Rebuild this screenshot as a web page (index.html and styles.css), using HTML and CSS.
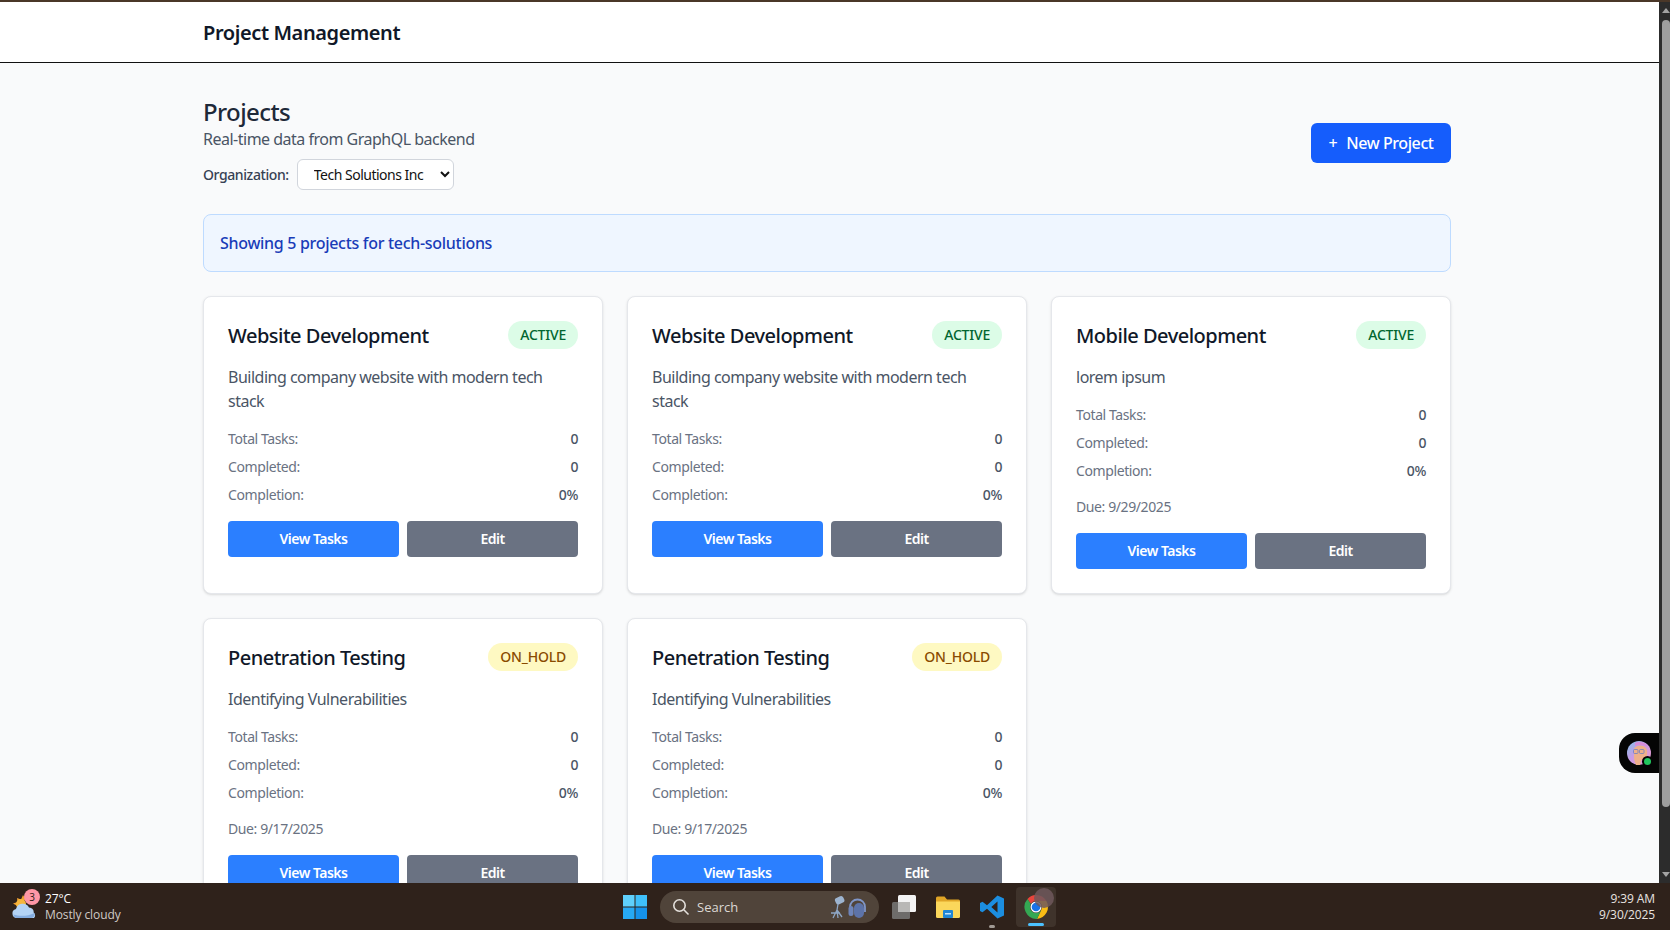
FILE: index.html
```html
<!DOCTYPE html>
<html lang="en">
<head>
  <meta charset="UTF-8" />
  <meta name="viewport" content="width=device-width, initial-scale=1.0" />
  <title>Project Management</title>
  <link rel="stylesheet" href="styles.css">
</head>
<body>
  <div class="screen">
    <div class="top-strip"></div>

    <div class="browser">
      <div class="page">
        <header class="site-header">
          <h1>Project Management</h1>
        </header>

        <main class="content">
          <div class="page-head">
            <div>
              <h2>Projects</h2>
              <p class="subtitle">Real-time data from GraphQL backend</p>
              <div class="org-row">
                <label for="org">Organization:</label>
                <select id="org">
                  <option>Tech Solutions Inc</option>
                </select>
              </div>
            </div>
            <button class="new-project"><span class="plus">+</span>New Project</button>
          </div>

          <div class="banner">Showing 5 projects for tech-solutions</div>

          <div class="grid">
            <div class="card">
              <div class="card-head">
                <h3>Website Development</h3>
                <span class="badge active">ACTIVE</span>
              </div>
              <p class="desc">Building company website with modern tech stack</p>
              <div class="stats">
                <div class="stat"><span>Total Tasks:</span><b>0</b></div>
                <div class="stat"><span>Completed:</span><b>0</b></div>
                <div class="stat"><span>Completion:</span><b>0%</b></div>
              </div>
              <div class="actions">
                <button class="btn view">View Tasks</button>
                <button class="btn edit">Edit</button>
              </div>
            </div>

            <div class="card">
              <div class="card-head">
                <h3>Website Development</h3>
                <span class="badge active">ACTIVE</span>
              </div>
              <p class="desc">Building company website with modern tech stack</p>
              <div class="stats">
                <div class="stat"><span>Total Tasks:</span><b>0</b></div>
                <div class="stat"><span>Completed:</span><b>0</b></div>
                <div class="stat"><span>Completion:</span><b>0%</b></div>
              </div>
              <div class="actions">
                <button class="btn view">View Tasks</button>
                <button class="btn edit">Edit</button>
              </div>
            </div>

            <div class="card">
              <div class="card-head">
                <h3>Mobile Development</h3>
                <span class="badge active">ACTIVE</span>
              </div>
              <p class="desc">lorem ipsum</p>
              <div class="stats">
                <div class="stat"><span>Total Tasks:</span><b>0</b></div>
                <div class="stat"><span>Completed:</span><b>0</b></div>
                <div class="stat"><span>Completion:</span><b>0%</b></div>
              </div>
              <p class="due">Due: 9/29/2025</p>
              <div class="actions">
                <button class="btn view">View Tasks</button>
                <button class="btn edit">Edit</button>
              </div>
            </div>

            <div class="card">
              <div class="card-head">
                <h3>Penetration Testing</h3>
                <span class="badge hold">ON_HOLD</span>
              </div>
              <p class="desc">Identifying Vulnerabilities</p>
              <div class="stats">
                <div class="stat"><span>Total Tasks:</span><b>0</b></div>
                <div class="stat"><span>Completed:</span><b>0</b></div>
                <div class="stat"><span>Completion:</span><b>0%</b></div>
              </div>
              <p class="due">Due: 9/17/2025</p>
              <div class="actions">
                <button class="btn view">View Tasks</button>
                <button class="btn edit">Edit</button>
              </div>
            </div>

            <div class="card">
              <div class="card-head">
                <h3>Penetration Testing</h3>
                <span class="badge hold">ON_HOLD</span>
              </div>
              <p class="desc">Identifying Vulnerabilities</p>
              <div class="stats">
                <div class="stat"><span>Total Tasks:</span><b>0</b></div>
                <div class="stat"><span>Completed:</span><b>0</b></div>
                <div class="stat"><span>Completion:</span><b>0%</b></div>
              </div>
              <p class="due">Due: 9/17/2025</p>
              <div class="actions">
                <button class="btn view">View Tasks</button>
                <button class="btn edit">Edit</button>
              </div>
            </div>
          </div>
        </main>

        <!-- floating chat widget -->
        <div class="widget">
          <span class="avatar">
            <svg width="24" height="24" viewBox="0 0 24 24">
              <defs>
                <linearGradient id="holo" x1="0" y1="0" x2="1" y2="1">
                  <stop offset="0" stop-color="#7fc4e8"/>
                  <stop offset="0.45" stop-color="#c99ae6"/>
                  <stop offset="1" stop-color="#ee9ac8"/>
                </linearGradient>
              </defs>
              <circle cx="12" cy="12" r="12" fill="url(#holo)"/>
              <path d="M9 24c-1-3-2-5-2-8V8c1-4 9-5 12-1 2 3 1 8 0 10-2 1-4 1-5 3l-1 4z" fill="#eeb08a"/>
              <path d="M8 2c4-2 10-1 13 4-3-2-9-3-13-1z" fill="#d98bd8"/>
              <rect x="6.500" y="8.500" width="4.500" height="4" rx="1" fill="none" stroke="#6d7fc0" stroke-width="0.800"/>
              <rect x="12.500" y="8.500" width="4.500" height="4" rx="1" fill="none" stroke="#6d7fc0" stroke-width="0.800"/>
            </svg>
            <span class="online"></span>
          </span>
        </div>
      </div>

      <div class="scrollbar">
        <span class="arrow up"></span>
        <span class="thumb"></span>
        <span class="arrow down"></span>
      </div>
    </div>

    <footer class="taskbar">
      <div class="weather">
        <span class="weather-icon">
          <svg width="26" height="26" viewBox="0 0 26 26">
            <path d="M2 9.500l4.500-1.500-.5-4 4 1.500 2-4.500 2.500 4-5 6-3 1z" fill="#f0a030"/>
            <circle cx="10" cy="10" r="5" fill="#f6b63c"/>
            <path d="M6 24a4.500 4.500 0 0 1-1-8.900 7 7 0 0 1 13-1.600 5.300 5.300 0 0 1 4.800 5.200A3.500 3.500 0 0 1 23 24z" fill="#b4d3f4"/>
            <path d="M2.500 20.500c6 2 14 2 21-1.500a4 4 0 0 1-3 5H6a4 4 0 0 1-3.500-3.500z" fill="#86aee0"/>
          </svg>
          <span class="weather-badge">3</span>
        </span>
        <div class="weather-text">
          <div>27°C</div>
          <div class="dim">Mostly cloudy</div>
        </div>
      </div>

      <div class="task-icons">
        <svg class="win" width="24" height="24" viewBox="0 0 24 24">
          <rect x="0" y="0" width="11.500" height="11.500" fill="#5fd0fb"/>
          <rect x="12.500" y="0" width="11.500" height="11.500" fill="#3fc0fa"/>
          <rect x="0" y="12.500" width="11.500" height="11.500" fill="#27a9f3"/>
          <rect x="12.500" y="12.500" width="11.500" height="11.500" fill="#1592ea"/>
        </svg>

        <div class="search">
          <svg width="18" height="18" viewBox="0 0 18 18" fill="none" stroke="#e4e0dc" stroke-width="1.600">
            <circle cx="7.500" cy="7.500" r="5.700"/>
            <path d="M11.800 11.800L16.500 16.500"/>
          </svg>
          <span class="search-label">Search</span>
          <svg class="search-art" width="38" height="26" viewBox="0 0 38 26" fill="none">
            <rect x="6" y="3" width="9" height="7" rx="2.500" transform="rotate(-25 10 6)" fill="#9db4cf"/>
            <path d="M9 10l-1 6M8 16l-4 8M8 16l1 8M8 16l5 7M2 19h9" stroke="#8ea6c4" stroke-width="1.300"/>
            <path d="M21 18v-5a7.500 7.500 0 0 1 15 0v5" stroke="#7f96c8" stroke-width="1.800"/>
            <rect x="19.500" y="12" width="5" height="10" rx="2.500" fill="#6e84b8"/>
            <rect x="25" y="9" width="10" height="15" rx="5" fill="#5d73a8"/>
          </svg>
        </div>

        <span class="tray-icon">
          <svg width="24" height="24" viewBox="0 0 24 24">
            <rect x="6" y="0" width="18" height="17" rx="1.500" fill="#f4f4f4"/>
            <rect x="0" y="7" width="18" height="17" rx="1.500" fill="#6e6c6a"/>
            <rect x="6" y="7" width="12" height="10" fill="#b9b8b6"/>
          </svg>
        </span>

        <span class="tray-icon">
          <svg width="24" height="24" viewBox="0 0 24 24">
            <path d="M0 3a1.500 1.500 0 0 1 1.500-1.500h7L11 4.500h11.500A1.500 1.500 0 0 1 24 6v2H0z" fill="#e0a526"/>
            <path d="M0 6.500h24v15a1.500 1.500 0 0 1-1.500 1.500h-21A1.500 1.500 0 0 1 0 21.500z" fill="#fbd75b"/>
            <rect x="7" y="15" width="10" height="8" rx="1" fill="#1f86d6"/>
            <rect x="9" y="18" width="6" height="1.500" fill="#bfe2fa"/>
          </svg>
        </span>

        <span class="tray-icon has-dot">
          <svg width="24" height="24" viewBox="0 0 24 24">
            <path d="M17.500 0.500L24 3.500v17l-6.500 3L7 13.800l-4.500 3.500L0 16V8l2.500-1.300L7 10.200zM17.500 6.500L11.300 12l6.200 5.500z" fill="#1c8ee0"/>
          </svg>
          <span class="dot"></span>
        </span>

        <span class="chrome-tile">
          <svg width="24" height="24" viewBox="0 0 24 24">
            <path d="M12 0a12 12 0 0 1 10.400 6H12a6 6 0 0 0-5.200 3L3.500 4A12 12 0 0 1 12 0z" fill="#e8453c"/>
            <path d="M22.400 6A12 12 0 0 1 13 23.900L17.200 15A6 6 0 0 0 17.200 9 6 6 0 0 0 12 6z" fill="#f9bc15"/>
            <path d="M13 23.900A12 12 0 0 1 3.500 4L6.800 9a6 6 0 0 0 0 6 6 6 0 0 0 10.400 0z" fill="#34a853"/>
            <circle cx="12" cy="12" r="5.500" fill="#fff"/>
            <circle cx="12" cy="12" r="4.300" fill="#1a73e8"/>
          </svg>
          <span class="chrome-overlay"></span>
          <span class="bar"></span>
        </span>
      </div>

      <div class="clock">
        <div>9:39 AM</div>
        <div>9/30/2025</div>
      </div>
    </footer>
  </div>
</body>
</html>
```

FILE: styles.css
```css
* {
  box-sizing: border-box;
}

html,
body {
  margin: 0;
  height: 100%;
  overflow: hidden;
}

body {
  font-family: "Noto Sans", "Open Sans", Arial, sans-serif;
  background: #f9fafb;
}

h1,
h2,
h3,
p {
  margin: 0;
}

.screen {
  display: flex;
  flex-direction: column;
  height: 930px;
}

.top-strip {
  height: 2px;
  background: #4a3728;
}

.browser {
  display: flex;
  height: 881px;
}

.page {
  position: relative;
  flex: 1;
  overflow: hidden;
}

/* header */
.site-header {
  height: 61px;
  padding-left: 203px;
  background: white;
  border-bottom: 1px solid #111;
  display: flex;
  align-items: center;
}

.site-header h1 {
  font-size: 20px;
  line-height: 28px;
  font-weight: 600;
  color: #101828;
  letter-spacing: -0.4px;
  margin-top: 2px;
}

.content {
  width: 1248px;
  margin-left: 203px;
  padding-top: 32px;
}

.page-head {
  display: flex;
  justify-content: space-between;
  align-items: center;
  margin-bottom: 24px;
}

.page-head h2 {
  font-size: 24px;
  line-height: 32px;
  font-weight: 500;
  color: #1e2939;
  letter-spacing: -0.6px;
  padding-top: 1px;
  margin-bottom: -1px;
}

.subtitle {
  font-size: 16px;
  line-height: 24px;
  color: #4a5565;
  letter-spacing: -0.5px;
}

.org-row {
  display: flex;
  align-items: center;
  gap: 8px;
  margin-top: 8px;
}

.org-row label {
  font-size: 14px;
  font-weight: 500;
  color: #364153;
  letter-spacing: -0.4px;
}

.org-row select {
  width: 157px;
  height: 31px;
  padding: 0 8px 0 12px;
  font-family: inherit;
  font-size: 14px;
  color: #111;
  background: white;
  border: 1px solid #d1d5dc;
  border-radius: 6px;
  letter-spacing: -0.5px;
}

.new-project {
  width: 140px;
  height: 40px;
  background: #155dfc;
  color: white;
  border: none;
  border-radius: 6px;
  font-family: inherit;
  font-size: 16px;
  font-weight: 500;
  letter-spacing: -0.4px;
}

.plus {
  margin-right: 9px;
}

.banner {
  height: 58px;
  padding: 16px;
  margin-bottom: 24px;
  background: #eff6ff;
  border: 1px solid #bedbff;
  border-radius: 8px;
  font-size: 16px;
  line-height: 24px;
  font-weight: 500;
  color: #193cb8;
  letter-spacing: -0.3px;
}

/* project cards */
.grid {
  display: grid;
  grid-template-columns: repeat(3, 1fr);
  gap: 24px;
}

.card {
  padding: 24px;
  background: white;
  border: 1px solid #e5e7eb;
  border-radius: 8px;
  box-shadow: 0 1px 3px rgba(0, 0, 0, 0.1), 0 1px 2px -1px rgba(0, 0, 0, 0.1);
}

.card-head {
  display: flex;
  justify-content: space-between;
  align-items: flex-start;
  height: 28px;
  margin-bottom: 16px;
}

.card-head h3 {
  font-size: 20px;
  line-height: 30px;
  font-weight: 500;
  color: #101828;
  letter-spacing: -0.5px;
}

.badge {
  height: 28px;
  padding: 0 12px;
  border-radius: 999px;
  font-size: 14px;
  line-height: 27px;
  font-weight: 500;
  letter-spacing: -0.2px;
}

.badge.active {
  background: #dcfce7;
  color: #016630;
}

.badge.hold {
  background: #fef9c2;
  color: #894b00;
}

.desc {
  font-size: 16px;
  line-height: 24px;
  color: #4a5565;
  margin-bottom: 16px;
  letter-spacing: -0.5px;
}

.stats {
  margin-bottom: 16px;
}

.stat {
  display: flex;
  justify-content: space-between;
  font-size: 14px;
  line-height: 20px;
  color: #6a7282;
  margin-bottom: 8px;
  letter-spacing: -0.4px;
}

.stat:last-child {
  margin-bottom: 0;
}

.stat b {
  font-weight: 500;
  color: #4a5565;
}

.due {
  font-size: 14px;
  line-height: 20px;
  color: #6a7282;
  margin-bottom: 16px;
  letter-spacing: -0.4px;
}

.actions {
  display: flex;
  gap: 8px;
}

.btn {
  flex: 1;
  height: 36px;
  padding-bottom: 3px;
  border: none;
  border-radius: 4px;
  color: white;
  font-family: inherit;
  font-size: 14px;
  font-weight: 600;
  letter-spacing: -0.5px;
}

.btn.view {
  background: #2b7fff;
}

.btn.edit {
  background: #6a7282;
}

/* chat widget */
.widget {
  position: absolute;
  top: 731px;
  right: 0;
  width: 40px;
  height: 40px;
  padding: 8px;
  background: #050505;
  border-radius: 16px 0 0 16px;
}

.avatar {
  position: relative;
  display: block;
  width: 24px;
  height: 24px;
}

.avatar svg {
  display: block;
}

.online {
  position: absolute;
  right: 0;
  bottom: 0;
  width: 7px;
  height: 7px;
  border-radius: 50%;
  background: #22c55e;
  box-shadow: 0 0 0 2px #050505;
}

/* fake browser scrollbar */
.scrollbar {
  width: 11px;
  background: #2c2c2c;
  display: flex;
  flex-direction: column;
  align-items: flex-end;
}

.arrow {
  width: 0;
  height: 0;
  border-left: 4px solid transparent;
  border-right: 4px solid transparent;
}

.arrow.up {
  margin-top: 6px;
  border-bottom: 5px solid #a3a3a3;
}

.arrow.down {
  margin-top: 65px;
  border-top: 5px solid #a3a3a3;
}

.thumb {
  width: 8px;
  height: 787px;
  margin-top: 7px;
  background: #9e9e9e;
  border-radius: 4px;
}

/* windows taskbar */
.taskbar {
  height: 47px;
  display: grid;
  grid-template-columns: 623px auto 1fr;
  align-items: center;
  background: #2f221b;
  color: white;
  font-family: "Open Sans", "Noto Sans", Arial, sans-serif;
  font-size: 12px;
}

.weather {
  display: flex;
  align-items: center;
  gap: 8px;
  padding-left: 11px;
}

.weather-icon {
  position: relative;
  width: 26px;
  height: 26px;
}

.weather-badge {
  position: absolute;
  top: -5px;
  left: 13px;
  width: 16px;
  height: 16px;
  border-radius: 50%;
  background: #ff97a6;
  color: #2b1a14;
  font-size: 10px;
  line-height: 16px;
  text-align: center;
}

.weather-text {
  line-height: 16px;
  letter-spacing: -0.1px;
}

.dim {
  color: #cfcac6;
}

.task-icons {
  display: flex;
  align-items: center;
}

.win {
  margin-right: 13px;
}

.search {
  width: 219px;
  height: 32px;
  display: flex;
  align-items: center;
  gap: 7px;
  padding: 0 12px;
  margin-right: 13px;
  background: #50443a;
  border-radius: 16px;
}

.search-label {
  flex: 1;
  font-size: 13px;
  color: #dcd8d4;
}

.tray-icon {
  position: relative;
  display: flex;
  width: 24px;
  margin-right: 20px;
}

.dot {
  position: absolute;
  left: 9px;
  bottom: -9px;
  width: 6px;
  height: 3px;
  border-radius: 2px;
  background: #a19a94;
}

.chrome-tile {
  position: relative;
  width: 40px;
  height: 40px;
  margin-left: -8px;
  display: flex;
  align-items: center;
  justify-content: center;
  background: #3f332b;
  border-radius: 4px;
}

.chrome-overlay {
  position: absolute;
  top: 1px;
  right: 2px;
  width: 20px;
  height: 20px;
  border-radius: 50%;
  background: rgba(110, 88, 92, 0.85);
}

.bar {
  position: absolute;
  left: 12px;
  bottom: 1px;
  width: 16px;
  height: 3px;
  border-radius: 2px;
  background: #4cc2ff;
}

.clock {
  padding-right: 15px;
  text-align: right;
  line-height: 16px;
  color: #e8e4e0;
  letter-spacing: -0.1px;
}
```
